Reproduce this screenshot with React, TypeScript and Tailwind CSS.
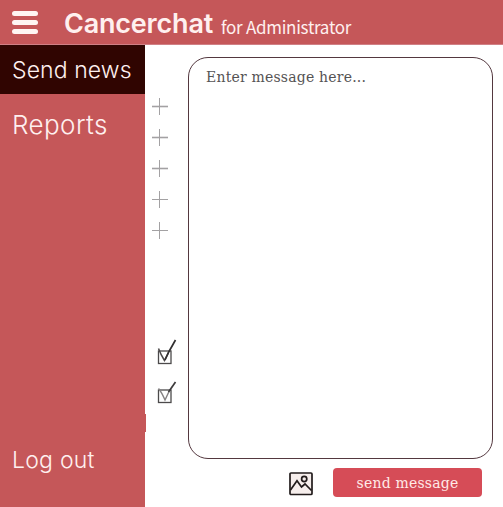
const PLUS_ROWS = [1, 2, 3, 4, 5];

function Plus({ faint }: { faint: boolean }) {
  return (
    <svg width="16" height="17" viewBox="0 0 16 17" fill="none" stroke="#a3a1a3">
      <path d="M0 8.5H16" strokeWidth={faint ? 1 : 1.6} />
      <path d="M7.5 0V17" strokeWidth="1" />
    </svg>
  );
}

function Check({ soft }: { soft: boolean }) {
  return (
    <svg width="20" height="26" viewBox="0 0 20 26" fill="none">
      <rect x="1.5" y="12" width="12.5" height="12.5" stroke="#4c4a4b" strokeWidth="1.3" />
      {soft ? (
        <>
          <path d="M1.5 10.5 Q4.5 14 8 22 L12 13.5" stroke="#858283" strokeWidth="1.4" />
          <path d="M11.5 14 L18.5 4" stroke="#3c3a3b" strokeWidth="1.7" />
        </>
      ) : (
        <>
          <path d="M1.5 9.5 Q3.5 15 7.5 21.5 L11.5 13.5" stroke="#4b4849" strokeWidth="1.5" />
          <path d="M8 21 L12 12.5 L18.5 1" stroke="#323031" strokeWidth="1.7" />
        </>
      )}
    </svg>
  );
}

export default function App() {
  return (
    <div className="flex h-[507px] w-[503px] flex-col overflow-hidden bg-white">
      <header className="flex h-[45px] shrink-0 items-start border-b border-[#d08085] bg-[#c55759] text-[#fff0ef]">
        <div className="ml-3 mt-[11px] flex w-[26px] flex-col gap-[4px]">
          <span className="h-[5px] rounded-full bg-[#fff5f3]" />
          <span className="h-[5px] rounded-full bg-[#fff5f3]" />
          <span className="h-[5px] rounded-full bg-[#fff5f3]" />
        </div>
        <h1 className="ml-[26px] mt-[8px] w-[157px] whitespace-nowrap font-['Inter',sans-serif] text-[27px] font-semibold leading-[32px] tracking-[-0.2px]">
          Cancerchat
        </h1>
        <span className="mt-[15px] whitespace-nowrap font-['Noto_Sans_CJK_SC',sans-serif] text-[17px] leading-[24px] tracking-[-0.28px]">
          for Administrator
        </span>
      </header>
      <div className="flex min-h-0 flex-1">
        <nav className="flex w-[145px] shrink-0 flex-col bg-[#c55759] font-['Inter',sans-serif] font-light text-[#fff0ef]">
          <div className="flex h-[49px] items-center whitespace-nowrap bg-[#300501] pl-3 pt-[2px] text-[23px] tracking-[0.1px]">
            Send news
          </div>
          <div className="flex h-[60px] items-center whitespace-nowrap pl-3 pt-px text-[26px] tracking-[0.4px]">Reports</div>
          <div className="mb-[29px] mt-auto whitespace-nowrap pl-3 text-[23px] leading-[36px] tracking-[0.25px]">Log out</div>
        </nav>
        <aside className="flex w-[43px] shrink-0 flex-col">
          <div className="ml-[7px] mt-[53px] flex flex-col gap-[14px]">
            {PLUS_ROWS.map((n) => (
              <Plus key={n} faint={n > 3} />
            ))}
          </div>
          <div className="ml-[12px] mt-[100px] flex flex-col gap-[13px]">
            <Check soft={false} />
            <Check soft={true} />
          </div>
          <div className="mt-[10px] h-[18px] w-px bg-[#c55759]" />
        </aside>
        <main className="flex flex-1 flex-col pt-[12px]">
          <div className="h-[402px] w-[305px] rounded-[20px] border-[1.5px] border-[#54383f] bg-white pl-[17px] pt-[8px] font-['DejaVu_Serif',serif] text-[14px] leading-[22px] tracking-[0.2px] text-[#555354]">
            Enter message here...
          </div>
          <div className="mt-[9px] flex items-start pl-[101px]">
            <svg width="24" height="24" viewBox="0 0 24 24" className="mt-[4px]" fill="none" stroke="#211b1b" strokeWidth="1.7">
              <rect x="1" y="1" width="22" height="21.5" rx="1" fill="#f6eeec" />
              <path d="M1.5 18 L8 8.8 L12.5 15 L16 12 L22.5 18.5" />
              <circle cx="15.2" cy="7" r="2.6" />
            </svg>
            <button className="ml-[20px] h-[29px] w-[149px] whitespace-nowrap rounded-[4px] bg-[#d64c57] text-center font-['DejaVu_Serif',serif] text-[14px] leading-[28px] tracking-[0.2px] text-[#ffe9e7]">
              send message
            </button>
          </div>
        </main>
      </div>
    </div>
  );
}
